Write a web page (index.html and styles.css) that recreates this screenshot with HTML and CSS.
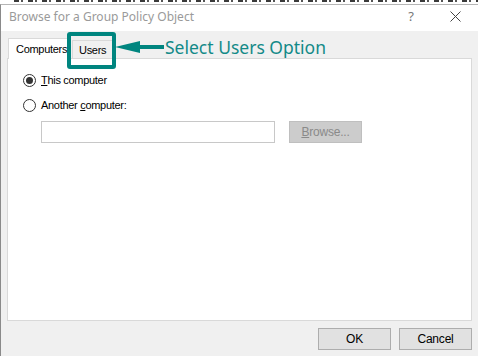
FILE: index.html
```html
<!DOCTYPE html>
<html lang="en">

<head>
    <meta charset="utf-8">
    <title>Browse for a Group Policy Object</title>
    <link rel="stylesheet" href="styles.css">
</head>

<body>

    <div class="bagved"></div>

    <div class="vindue">

        <header class="titel">
            <h1>Browse for a Group Policy Object</h1>
            <span class="hjaelp">?</span>
            <svg class="luk" width="11" height="11" viewBox="0 0 11 11">
                <path d="M0.5 0.5 L10.5 10.5 M10.5 0.5 L0.5 10.5" stroke="#444" stroke-width="1" fill="none" />
            </svg>
        </header>

        <main class="indhold">

            <nav class="faner">
                <button class="fane valgt">Computers</button>
                <button class="fane">Users</button>
            </nav>

            <section class="panel">
                <label class="valg">
                    <span class="radio markeret"></span>
                    <span><u>T</u>his computer</span>
                </label>
                <label class="valg">
                    <span class="radio"></span>
                    <span>Another <u>c</u>omputer:</span>
                </label>
                <div class="soeg">
                    <input type="text" class="felt">
                    <button class="knap slaaet-fra"><u>B</u>rowse...</button>
                </div>
            </section>

            <footer class="bund">
                <button class="knap">OK</button>
                <button class="knap">Cancel</button>
            </footer>

            <!-- markering lagt ovenpå skærmbilledet -->
            <div class="ramme"></div>
            <div class="note">
                <svg class="pil" width="50" height="14" viewBox="0 0 50 14">
                    <path d="M0 7 L25 1 L25 5 L49 5 L49 9 L25 9 L25 13 Z" fill="#00857f" />
                </svg>
                <span>Select Users Option</span>
            </div>

        </main>
    </div>

</body>

</html>
```

FILE: styles.css
```css
* {
    box-sizing: border-box;
}

body {
    margin: 0;
    width: 478px;
    height: 356px;
    overflow: hidden;
    background-color: #ffffff;
    font-family: 'Liberation Sans', Arial, sans-serif;
    font-size: 11px;
    letter-spacing: -0.3px;
    color: #000000;
}

/* rest af vinduet bagved, kun de nederste pixels af teksten ses */
.bagved {
    height: 4px;
    background-color: #ffffff;
    background-image: repeating-linear-gradient(90deg, #3a3a3a 0 5px, #ffffff 5px 7px, #555555 7px 9px, #ffffff 9px 14px);
    background-size: 620px 2px;
    background-position: 14px 0;
    background-repeat: no-repeat;
}

.vindue {
    height: 352px;
    border-left: 1px solid #8a8a8a;
    border-top: 1px solid #b5b5b5;
    display: flex;
    flex-direction: column;
}

.titel {
    height: 26px;
    background-color: #ffffff;
    display: flex;
    align-items: center;
    padding-left: 8px;
    padding-bottom: 4px;
    flex-shrink: 0;
    letter-spacing: 0;
}

h1 {
    margin: 0;
    font-family: 'Noto Sans', sans-serif;
    font-weight: normal;
    font-size: 12px;
    color: #9a9a9a;
    flex: 1;
}

.hjaelp {
    font-family: 'Noto Sans', sans-serif;
    font-size: 13px;
    color: #777777;
    margin-right: 36px;
}

.luk {
    margin-right: 17px;
}

.indhold {
    position: relative;
    flex: 1;
    background-color: #f0f0f0;
    padding: 6px 6px 0 6px;
}

.faner {
    display: flex;
    align-items: flex-end;
    height: 21px;
    padding-left: 1px;
}

.fane {
    font-family: 'Liberation Sans', Arial, sans-serif;
    font-size: 11px;
    letter-spacing: -0.3px;
    background-color: #f0f0f0;
    border: 1px solid #d9d9d9;
    border-bottom: none;
    height: 18px;
    padding: 0 6px;
    margin: 0;
    margin-left: 3px;
    color: #000000;
}

.valgt {
    background-color: #ffffff;
    height: 21px;
    margin-left: 0;
    margin-bottom: -1px;
    position: relative;
    width: 61px;
    padding: 0 0 0 7px;
    text-align: left;
}

.panel {
    height: 263px;
    width: 465px;
    background-color: #ffffff;
    border: 1px solid #d9d9d9;
    padding: 14px 0 0 15px;
}

.valg {
    display: flex;
    align-items: center;
    gap: 5px;
    height: 14px;
    margin-bottom: 11px;
}

.radio {
    width: 13px;
    height: 13px;
    border: 1px solid #333333;
    border-radius: 50%;
    background-color: #ffffff;
    display: flex;
    align-items: center;
    justify-content: center;
}

.markeret::after {
    content: "";
    width: 7px;
    height: 7px;
    border-radius: 50%;
    background-color: #333333;
}

.soeg {
    display: flex;
    gap: 14px;
    margin-left: 18px;
    margin-top: -2px;
}

.felt {
    width: 234px;
    height: 22px;
    border: 1px solid #c8c8c8;
    background-color: #ffffff;
    margin: 0;
}

.knap {
    width: 73px;
    height: 22px;
    font-family: 'Liberation Sans', Arial, sans-serif;
    font-size: 12px;
    letter-spacing: -0.2px;
    background-color: #e1e1e1;
    border: 1px solid #adadad;
    color: #000000;
    padding: 0;
    margin: 0;
}

.slaaet-fra {
    background-color: #cccccc;
    border-color: #bfbfbf;
    color: #8a8a8a;
}

.bund {
    display: flex;
    justify-content: flex-end;
    gap: 8px;
    padding-top: 7px;
    padding-right: 0;
}

.ramme {
    position: absolute;
    left: 66px;
    top: 1px;
    width: 49px;
    height: 37px;
    border: 4px solid #00857f;
    border-radius: 3px;
}

.note {
    position: absolute;
    left: 114px;
    top: 4px;
    display: flex;
    align-items: center;
    letter-spacing: 0;
}

.note span {
    font-family: 'Noto Sans', sans-serif;
    font-size: 17.5px;
    color: #138a88;
}
```
